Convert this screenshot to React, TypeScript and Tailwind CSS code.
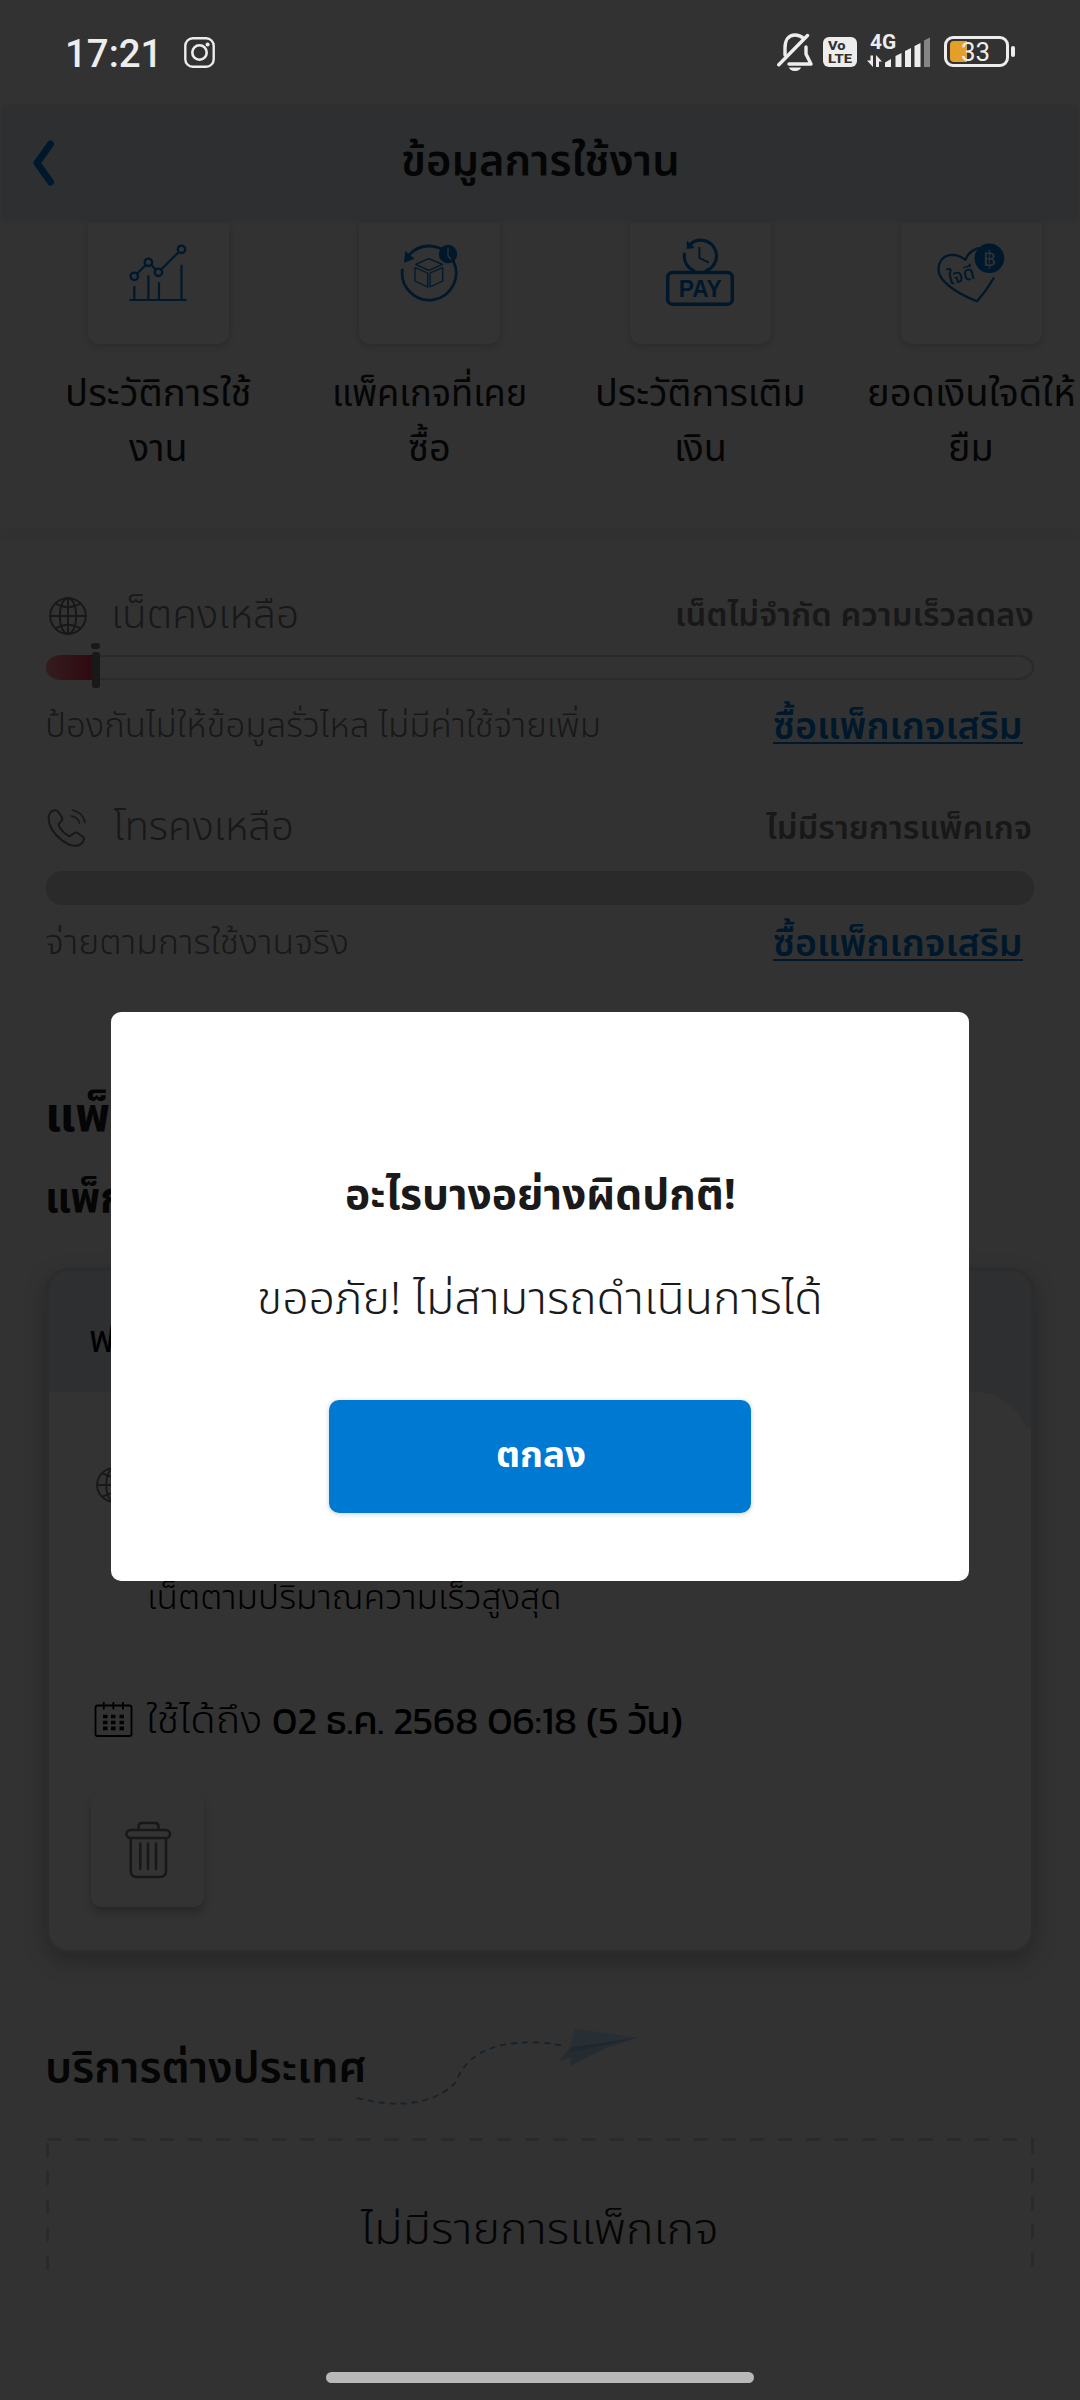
import { useLayoutEffect, useRef, useState, type ReactNode } from "react";

const BLUE = "#00182b";

/* Single line of text stretched horizontally to fill the width of its box. */
function Fit({ className = "", children }: { className?: string; children: ReactNode }) {
  const box = useRef<HTMLDivElement>(null);
  const text = useRef<HTMLSpanElement>(null);
  const [scale, setScale] = useState(1);
  useLayoutEffect(() => {
    if (box.current && text.current) setScale(box.current.clientWidth / text.current.offsetWidth);
  }, []);
  return (
    <div ref={box} className={"shrink-0 whitespace-nowrap " + className}>
      <span ref={text} className="inline-block origin-left" style={{ transform: `scaleX(${scale})` }}>
        {children}
      </span>
    </div>
  );
}

function StatusBar() {
  return (
    <div className="flex h-[106px] items-start text-[#ededed]">
      <Fit className="ml-[65px] mt-[32px] w-[97px] font-[Roboto] text-[38px] leading-[45px] font-medium">17:21</Fit>
      <svg className="ml-[22px] mt-[37px] h-[31px] w-[31px]" viewBox="0 0 31 31" fill="none" stroke="#ededed">
        <rect x="1.3" y="1.3" width="28.4" height="28.4" rx="7.5" strokeWidth="2.4" />
        <circle cx="15.5" cy="15.5" r="7.2" strokeWidth="2.6" />
        <circle cx="23.6" cy="7.4" r="2" fill="#ededed" stroke="none" />
      </svg>
      <svg className="ml-[562px] mt-[33px] h-[38px] w-[36px]" viewBox="777 33 36 38" fill="none" stroke="#ededed" strokeWidth="3.4" strokeLinecap="round">
        <path d="M785 55V48C785 39.5 789 35 795 35C798.500 35 801 36 803 38" />
        <path d="M806 47V54L811 64H789" strokeLinejoin="round" />
        <path d="M778.800 64.800L807.500 35.500" />
        <path d="M789 67.500H801C799.500 72.200 790.500 72.200 789 67.500Z" fill="#ededed" stroke="none" />
      </svg>
      <div className="ml-[10px] mt-[37px] flex h-[30px] w-[34px] flex-col items-start rounded-[6px] bg-[#ededed] pl-[5px] pt-[3px] font-[Roboto] text-[13px] font-extrabold text-[#323232]">
        <Fit className="h-[12px] w-[18px] leading-[12px]">Vo</Fit>
        <Fit className="h-[12px] w-[24px] leading-[14px]">LTE</Fit>
      </div>
      <div className="ml-[9px] mt-[33px] flex h-[34px] w-[65px] flex-col">
        <Fit className="ml-[4px] h-[18px] w-[26px] font-[Roboto] text-[20px] leading-[19px] font-bold">4G</Fit>
        <svg className="-mt-[14px] h-[30px] w-[65px]" viewBox="866 37 65 30" fill="#ededed">
          <path d="M870.500 55.500H873V67L867 60.500H870.500ZM876 67V55L882 61.500H879V67Z" />
          <path d="M885 62.500L891 59V67H885ZM895.500 56L901.500 53V67H895.500ZM905 51L911 48V67H905ZM914.500 46L920.500 43V67H914.500Z" />
          <path d="M924 40.500L930 37.500V67H924Z" fill="#858585" />
        </svg>
      </div>
      <div className="ml-[13px] mt-[36px] flex items-center gap-[2px]">
        <div className="flex h-[31px] w-[65px] items-center rounded-[9px] border-[3px] border-[#ededed] pl-[3px]">
          <div className="h-[21px] w-[17px] rounded-l-[4px] bg-[#e39f27]" />
          <Fit className="-ml-[6px] mt-[3px] w-[29px] font-[Roboto] text-[25px] leading-[24px]">33</Fit>
        </div>
        <div className="h-[11px] w-[4px] rounded-[2px] bg-[#ededed]" />
      </div>
    </div>
  );
}

function Header() {
  return (
    <div className="relative z-10 mx-[3px] flex h-[114px] items-center rounded-[4px] bg-[#2d2f31] shadow-[0_0_4px_rgba(0,0,0,0.15)]">
      <svg className="ml-[29px] h-[46px] w-[24px]" viewBox="0 0 24 46" fill="none" stroke={BLUE} strokeWidth="7" strokeLinecap="round" strokeLinejoin="round">
        <path d="M18.500 4L5 23L18.500 42" />
      </svg>
      <Fit className="-mt-[2px] ml-[345px] w-[279px] text-[42px] leading-[50px] font-semibold text-[#050505]">ข้อมูลการใช้งาน</Fit>
    </div>
  );
}

function UsageIcon() {
  return (
    <svg className="h-[60px] w-[60px]" viewBox="128 243 60 60" fill="none" stroke={BLUE} strokeWidth="2.200">
      <path d="M129.500 300H186.500M134.300 286V300M148.400 275.300V300M159 282.300V300M181.500 264.700V300" />
      <path d="M137 273.500L145.600 265.200M151.300 265L155.800 269.500M161.300 269.300L178.600 252.200" />
      <g strokeWidth="2.400">
        <circle cx="134.300" cy="276.300" r="3.700" />
        <circle cx="148.400" cy="262.300" r="3.700" />
        <circle cx="158.400" cy="272.300" r="3.700" />
        <circle cx="181.500" cy="249.300" r="3.700" />
      </g>
    </svg>
  );
}

function PackageIcon() {
  return (
    <svg className="h-[60px] w-[60px]" viewBox="400 243 60 60" fill="none" stroke={BLUE}>
      <path d="M403.300 270A27 27 0 1 0 411 254" strokeWidth="2.800" strokeLinecap="round" />
      <path d="M406.300 251L415.500 258.700L405 262.700Z" fill={BLUE} stroke="none" />
      <g strokeWidth="1.300" strokeLinejoin="round">
        <path d="M429.800 258.700L443.500 264.300L429.800 270.300L416.700 264.300Z" />
        <path d="M416 267.700L428.700 273V287L416 281Z" />
        <path d="M443.700 267.700L431 273V287L443.700 281Z" />
      </g>
      <circle cx="449" cy="254" r="9.200" fill={BLUE} stroke="none" />
      <path d="M449 247.700V256L452.300 259.500" stroke="#323232" strokeWidth="1.300" />
    </svg>
  );
}

function PayIcon() {
  return (
    <svg className="h-[70px] w-[70px]" viewBox="665 238 70 70" fill="none" stroke={BLUE}>
      <path d="M684.400 254A15.700 15.700 0 0 0 693.500 270.500M706.500 270.500A15.700 15.700 0 1 0 690.500 244" strokeWidth="3.200" strokeLinecap="round" />
      <path d="M694 271.500Q700 273.500 706 271.500" strokeWidth="2" />
      <path d="M687.200 241.500L694 247.500L687.200 248.500Z" fill={BLUE} strokeWidth="1" />
      <path d="M699.400 247V258L709 262.700" strokeWidth="1.900" />
      <rect x="667.700" y="272.600" width="64.600" height="31.600" rx="4.500" strokeWidth="3.500" />
      <text x="700.200" y="297.300" textAnchor="middle" textLength="43" lengthAdjust="spacingAndGlyphs" fontFamily="'Liberation Sans', sans-serif" fontSize="23.500" fontWeight="700" fill={BLUE} stroke="none">PAY</text>
    </svg>
  );
}

function HeartIcon() {
  return (
    <svg className="h-[62px] w-[70px]" viewBox="937 242 70 62" fill="none" stroke={BLUE} strokeWidth="2.300" strokeLinecap="round">
      <path d="M994.500 278.500Q988 290 978 301.200C962 295 945 285 940.500 274.500C937 263 944 255 953 254.800C959.500 254.800 963 257 966.500 259.800C969 252.500 976 247.500 984 248" strokeLinejoin="round" />
      <circle cx="990.400" cy="258.300" r="14.800" fill={BLUE} stroke="none" />
      <text x="990.400" y="266" textAnchor="middle" fontFamily="'Noto Sans', sans-serif" fontSize="21" fontWeight="500" fill="#323232" stroke="none">฿</text>
      <text transform="translate(950.500 285) rotate(-14)" textLength="27" lengthAdjust="spacingAndGlyphs" fontFamily="'Noto Sans Thai', sans-serif" fontSize="20" fontWeight="500" fill={BLUE} stroke="none">ใจดี</text>
    </svg>
  );
}

function Tile({ icon, children }: { icon: ReactNode; children: ReactNode }) {
  return (
    <div className="flex w-[271px] shrink-0 flex-col items-center">
      <div className="flex h-[121px] w-[141px] items-start justify-center rounded-b-[11px] bg-[#333333] shadow-[0_2px_6px_rgba(0,0,0,0.18)]">
        {icon}
      </div>
      <div className="mt-[24px] flex flex-col items-center text-[37px] leading-[55px] text-[#050505]">{children}</div>
    </div>
  );
}

function Tiles() {
  return (
    <div className="flex h-[308px] overflow-hidden bg-[#323232] pl-[22.500px] pt-[3px] shadow-[0_4px_12px_rgba(0,0,0,0.06)]">
      <Tile icon={<div className="pt-[20px]"><UsageIcon /></div>}>
        <Fit className="w-[187px]">ประวัติการใช้</Fit>
        <Fit className="w-[59px]">งาน</Fit>
      </Tile>
      <Tile icon={<div className="pt-[20px]"><PackageIcon /></div>}>
        <Fit className="w-[195px]">แพ็คเกจที่เคย</Fit>
        <Fit className="w-[43px]">ซื้อ</Fit>
      </Tile>
      <Tile icon={<div className="pt-[15px]"><PayIcon /></div>}>
        <Fit className="w-[211px]">ประวัติการเติม</Fit>
        <Fit className="w-[53px]">เงิน</Fit>
      </Tile>
      <Tile icon={<div className="pt-[19px]"><HeartIcon /></div>}>
        <Fit className="w-[209px]">ยอดเงินใจดีให้</Fit>
        <Fit className="w-[46px]">ยืม</Fit>
      </Tile>
    </div>
  );
}

function Globe({ className }: { className: string }) {
  return (
    <svg className={className} viewBox="0 0 38 38" fill="none" stroke="#181818" strokeWidth="2">
      <circle cx="19" cy="19" r="17.800" />
      <ellipse cx="19" cy="19" rx="8.300" ry="17.800" />
      <path d="M19 1V37M1 19H37M6.500 6.500Q19 14 31.500 6.500M6.500 31.500Q19 24 31.500 31.500" />
    </svg>
  );
}

function BuyLink() {
  return (
    <div className="mr-[11px] mt-[1px] flex h-[41px] border-b-[2px] border-[#00182b]">
      <Fit className="w-[250px] text-[37px] leading-[50px] font-semibold text-[#00182b]">ซื้อแพ็กเกจเสริม</Fit>
    </div>
  );
}

function Balances() {
  return (
    <div className="mx-[46px] text-[#181818]">
      <div className="mt-[63px] flex h-[50px] items-center">
        <Globe className="-mt-[1px] ml-[3px] h-[38px] w-[38px]" />
        <Fit className="mt-[1px] ml-[24px] w-[188px] text-[39px] leading-[50px] font-[350]">เน็ตคงเหลือ</Fit>
        <Fit className="ml-auto w-[359px] text-[32px] leading-[50px] font-semibold">เน็ตไม่จำกัด ความเร็วลดลง</Fit>
      </div>
      <div className="relative mt-[14px] flex h-[25px] rounded-[16px/12px] border-2 border-[#2a2a2a]">
        <div className="-my-[2px] -ml-[2px] w-[48px] rounded-l-[16px_12px] bg-gradient-to-r from-[#341c1f] to-[#2e080f]" />
        <div className="absolute -top-[14px] left-[43px] flex flex-col items-center gap-[3px]">
          <div className="h-[6px] w-[9px] rounded-full bg-[#181818]" />
          <div className="h-[36px] w-[8px] rounded-[3px] bg-[#181818]" />
        </div>
      </div>
      <div className="mt-[22px] flex h-[50px] items-start justify-between">
        <Fit className="-ml-px w-[556px] text-[34px] leading-[50px] font-[350]">ป้องกันไม่ให้ข้อมูลรั่วไหล ไม่มีค่าใช้จ่ายเพิ่ม</Fit>
        <BuyLink />
      </div>
      <div className="mt-[51px] flex h-[50px] items-center">
        <svg className="ml-px h-[40px] w-[40px]" viewBox="47 807 40 40" fill="none" stroke="#181818" strokeWidth="2" strokeLinecap="round" strokeLinejoin="round">
          <path d="M52 810C55 808.500 57 809 58.500 811L62 816.500C63 819 62 820 60 821.500C58 823 58.500 824.500 59.500 826C62 830 65 833 68.500 834.800C70.500 835.500 71.500 834.500 73 832.800C74.500 831 75.500 831 77.500 832L82.500 835.500C84.500 837 84 839.500 82.500 841.500C79 845.500 74 845.500 69 843.500C60 839.500 52 831 49.500 823C48 817.500 48.500 812.500 52 810Z" />
          <path d="M71.500 815Q78 816.500 79.500 822M72.500 809Q83 811.500 85 821.500" strokeWidth="1.600" />
        </svg>
        <Fit className="mt-[2px] ml-[26px] w-[181px] text-[39px] leading-[50px] font-[350]">โทรคงเหลือ</Fit>
        <Fit className="ml-auto mr-[2px] mt-[1px] w-[266px] text-[32px] leading-[50px] font-semibold">ไม่มีรายการแพ็คเกจ</Fit>
      </div>
      <div className="mt-[18px] h-[34px] rounded-[16px] bg-[#2a2a2a]" />
      <div className="mt-[14px] flex h-[50px] items-start justify-between">
        <Fit className="-ml-px w-[304px] text-[34px] leading-[50px] font-[350]">จ่ายตามการใช้งานจริง</Fit>
        <BuyLink />
      </div>
    </div>
  );
}

function PackageCard() {
  return (
    <div className="mx-[46px] mt-[43px] h-[685px] overflow-hidden rounded-[22px] border-[3px] border-[#2c2c2c] bg-[#333333] text-black shadow-[0_8px_22px_rgba(0,0,0,0.25)]">
      <div className="h-[157px] bg-[#2d2f31]">
        <div className="flex h-[121px] items-center pl-[40px] pt-[17px] text-[38px]">ฟรี</div>
        <div className="h-[60px] rounded-tr-[55px_60px] bg-[#333333]" />
      </div>
      <div className="ml-[47px] mt-[39px] flex h-[36px] items-center">
        <Globe className="h-[36px] w-[36px]" />
      </div>
      <Fit className="ml-[98px] mt-[71px] w-[415px] text-[34px] leading-[50px] font-[350]">เน็ตตามปริมาณความเร็วสูงสุด</Fit>
      <div className="mt-[72px] flex h-[50px] items-center text-[38px] leading-[50px]">
        <svg className="-mt-[4px] ml-[45px] h-[37px] w-[40px]" viewBox="94 1701 40 37" fill="none" stroke="#000" strokeWidth="1.800">
          <rect x="95.500" y="1705.500" width="36" height="30.500" rx="2" />
          <path d="M103.800 1702V1709.500M113.400 1702V1709.500M123 1702V1709.500" />
          <path d="M103 1716.500H107.500M111 1716.500H115.500M119.500 1716.500H124M103 1722.500H107.500M111 1722.500H115.500M119.500 1722.500H124M103 1728.300H107.500M111 1728.300H115.500M119.500 1728.300H124" strokeWidth="3.700" />
        </svg>
        <Fit className="mt-[2px] ml-[12px] w-[116px] font-[350]">ใช้ได้ถึง</Fit>
        <Fit className="-mt-[2px] ml-[10px] w-[411px] font-[Kanit] text-[40px] font-normal">02 ธ.ค. 2568 06:18 (5 วัน)</Fit>
      </div>
      <div className="ml-[42px] mt-[47px] flex h-[114px] w-[113px] items-center justify-center rounded-[10px] bg-[#333333] shadow-[0_6px_8px_rgba(0,0,0,0.22)]">
        <svg className="h-[60px] w-[50px]" viewBox="123 1820 50 60" fill="none" stroke="#181818" strokeWidth="2.500">
          <path d="M138.500 1829V1826.500Q138.500 1823 142 1823H155Q158.500 1823 158.500 1826.500V1829" />
          <rect x="126.500" y="1830" width="43.500" height="8" rx="4" />
          <path d="M130.800 1838V1871Q130.800 1877 136.500 1877H160Q166 1877 166 1871V1838" />
          <path d="M140.300 1843.500V1869M148 1843.500V1869M156 1843.500V1869" strokeLinecap="round" />
        </svg>
      </div>
    </div>
  );
}

function Abroad() {
  return (
    <>
      <div className="mt-[73px] ml-[45px] flex h-[84px] items-start">
        <Fit className="mt-[18px] w-[322px] text-[43px] leading-[50px] font-semibold text-[#050505]">บริการต่างประเทศ</Fit>
        <svg className="-ml-[12px] h-[80px] w-[285px]" viewBox="355 2027 285 80" fill="none">
          <path d="M357 2099C400 2110 435 2105 456 2083C465 2060 485 2042 537 2043.500Q550 2044 561 2046.500" stroke="#14222c" strokeWidth="1.800" strokeDasharray="6 5" />
          <path d="M575 2029.700L637 2038.700L570 2048.700Z" fill="#272e34" />
          <path d="M570 2048.700L637 2038.700L606 2049L570 2066.700L571 2058L559 2062.500Z" fill="#242b31" />
          <path d="M570 2048.700L637 2038.700L571 2053Z" fill="#20272d" />
        </svg>
      </div>
      <div className="mx-[46px] mt-[28px] h-[135px] overflow-hidden">
        <svg className="block h-[3px] w-full" viewBox="0 0 988 3" preserveAspectRatio="none">
          <path d="M1.500 1.500H988" stroke="#2a2a2a" strokeWidth="3" strokeDasharray="14 14.100" />
        </svg>
        <div className="flex h-[132px] items-start justify-between">
          <svg className="h-full w-[3px]" viewBox="0 0 3 132"><path d="M1.500 2V130" stroke="#2a2a2a" strokeWidth="3" strokeDasharray="14 14.200" /></svg>
          <Fit className="mt-[60px] w-[358px] text-[43px] leading-[60px] font-[350] text-[#050505]">ไม่มีรายการแพ็กเกจ</Fit>
          <svg className="h-full w-[3px]" viewBox="0 0 3 132"><path d="M1.500 -1V130" stroke="#2a2a2a" strokeWidth="3" strokeDasharray="14 14.200" /></svg>
        </div>
      </div>
    </>
  );
}

function ErrorDialog() {
  return (
    <div className="absolute inset-0 z-20 flex flex-col items-center pt-[1012px]">
      <div role="dialog" className="flex h-[569px] w-[858px] flex-col items-center rounded-[10px] bg-white text-[#1a1a1a]">
        <Fit className="mt-[159px] w-[391px] text-[42px] leading-[50px] font-bold">อะไรบางอย่างผิดปกติ!</Fit>
        <Fit className="mt-[50px] w-[566px] text-[44px] leading-[60px] font-[350]">ขออภัย! ไม่สามารถดำเนินการได้</Fit>
        <button className="mt-[69px] flex h-[113px] w-[422px] items-center justify-center rounded-[10px] bg-[#0079d2] text-white shadow-[0_1px_5px_rgba(0,0,0,0.2)]">
          <Fit className="-mt-[2px] w-[90px] text-[36px] leading-[50px] font-bold">ตกลง</Fit>
        </button>
      </div>
    </div>
  );
}

export default function App() {
  return (
    <div className="relative h-[2400px] w-[1080px] overflow-hidden bg-[#323232] font-['Noto_Sans_Thai','Noto_Sans',sans-serif]">
      <StatusBar />
      <Header />
      <Tiles />
      <Balances />
      <div className="ml-[45px] mt-[118px] text-[48px] leading-[60px] font-bold text-[#050505]">แพ็กเกจ</div>
      <Fit className="ml-[45px] mt-[27px] w-[218px] text-[43px] leading-[50px] font-bold text-[#050505]">แพ็กเกจหลัก</Fit>
      <div className="h-px" />
      <PackageCard />
      <Abroad />
      <div className="mx-auto mt-[99px] h-[11px] w-[428px] rounded-full bg-[#b9b9b9]" />
      <ErrorDialog />
    </div>
  );
}
